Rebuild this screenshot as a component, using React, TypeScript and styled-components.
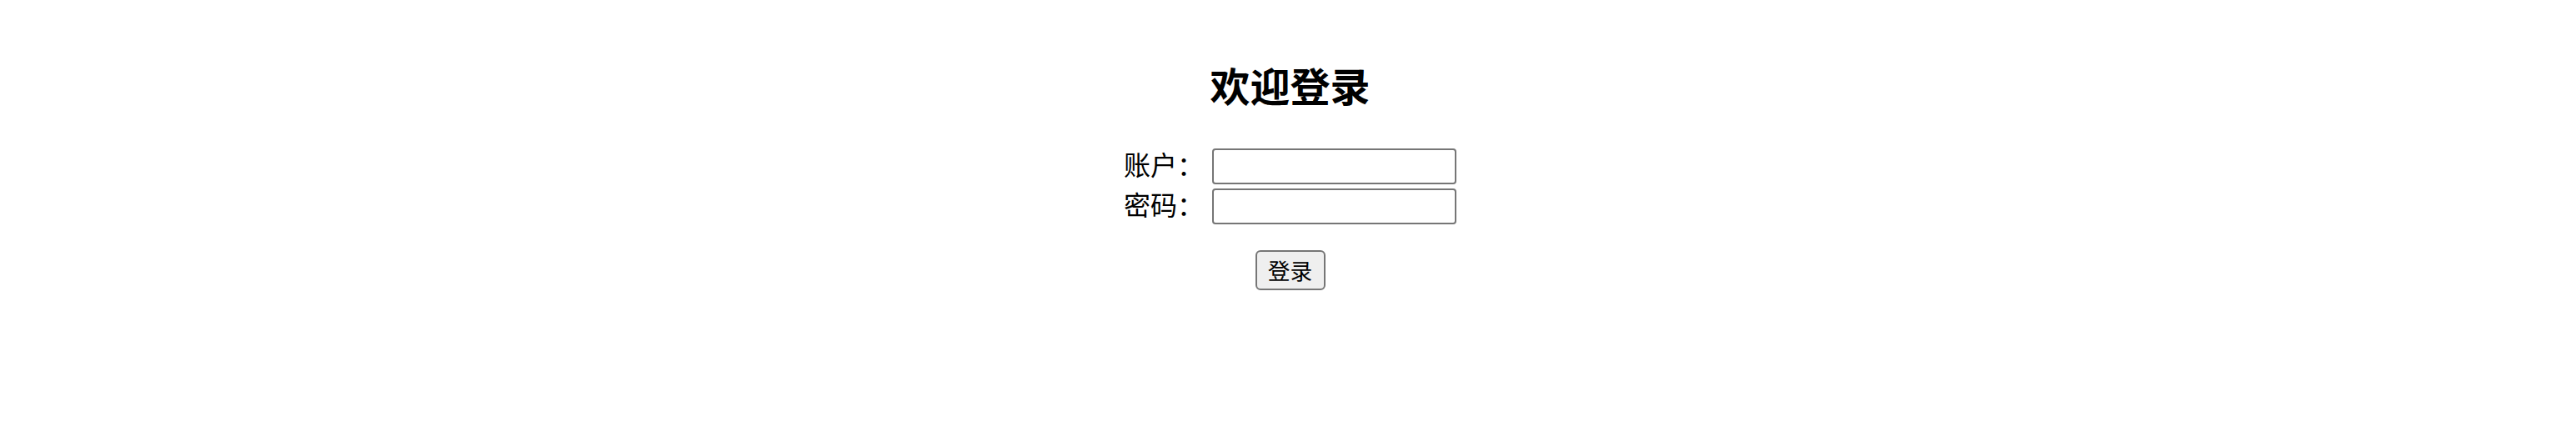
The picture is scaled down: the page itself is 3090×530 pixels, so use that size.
import React from "react";
import styled, { createGlobalStyle } from "styled-components";

const GlobalStyle = createGlobalStyle`
  html, body {
    margin: 0;
    padding: 0;
    background: #ffffff;
  }
  body {
    font-family: "Noto Sans CJK SC", "Noto Sans", sans-serif;
    color: #000000;
  }
`;

const Page = styled.div`
  display: flex;
  flex-direction: column;
  align-items: center;
  padding-top: 77px;
  padding-left: 5px;
  box-sizing: border-box;
  width: 100%;
`;

const Title = styled.h2`
  margin: 0;
  font-size: 48px;
  line-height: 48px;
  font-weight: 700;
`;

const Form = styled.form`
  display: flex;
  flex-direction: column;
  align-items: center;
  margin-top: 53px;
`;

const Fields = styled.div`
  display: flex;
  flex-direction: column;
  gap: 5px;
`;

const Row = styled.div`
  display: flex;
  align-items: center;
  gap: 10px;
  height: 43px;
`;

const Label = styled.label`
  width: 96px;
  height: 43px;
  font-size: 32px;
  line-height: 37px;
  padding-bottom: 6px;
  box-sizing: border-box;
`;

const Input = styled.input`
  box-sizing: border-box;
  width: 293px;
  height: 43px;
  border: 2px solid #767676;
  border-radius: 4px;
  background: #ffffff;
  padding: 2px 4px;
  font-size: 26px;
  outline: none;
`;

const Button = styled.button`
  box-sizing: border-box;
  margin-top: 31px;
  width: 84px;
  height: 48px;
  border: 2px solid #767676;
  border-radius: 6px;
  background: #efefef;
  font-family: "Noto Sans CJK SC", "Noto Sans", sans-serif;
  font-size: 26.67px;
  line-height: 1;
  color: #000000;
  padding: 0;
`;

export default function App() {
  return (
    <>
      <GlobalStyle />
      <Page>
        <Title>欢迎登录</Title>
        <Form onSubmit={(e) => e.preventDefault()}>
          <Fields>
            <Row>
              <Label htmlFor="account">账户：</Label>
              <Input id="account" type="text" />
            </Row>
            <Row>
              <Label htmlFor="password">密码：</Label>
              <Input id="password" type="password" />
            </Row>
          </Fields>
          <Button type="submit">登录</Button>
        </Form>
      </Page>
    </>
  );
}
